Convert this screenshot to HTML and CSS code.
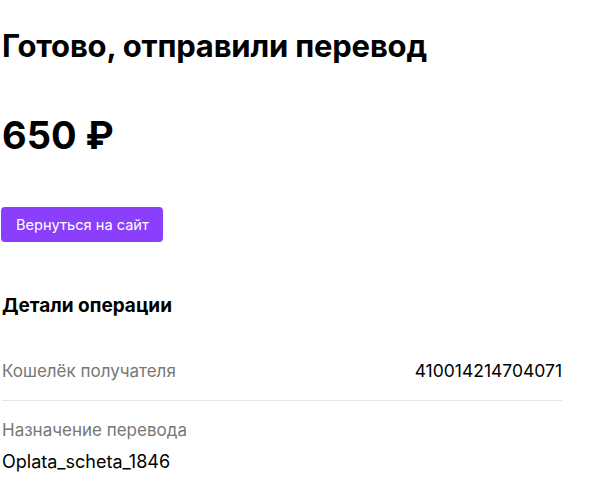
FILE: index.html
```html
<!DOCTYPE html>
<html lang="ru">
<head>
<meta charset="utf-8">
<link rel="stylesheet" href="styles.css">
</head>
<body>
<main class="page">
  <h1 class="title">Готово, отправили перевод</h1>
  <div class="amount">650 ₽</div>
  <a class="btn" href="#">Вернуться на сайт</a>
  <h2 class="subtitle">Детали операции</h2>
  <div class="row row-inline">
    <span class="label">Кошелёк получателя</span>
    <span class="value">410014214704071</span>
  </div>
  <div class="row row-stack">
    <span class="label">Назначение перевода</span>
    <span class="value value-long">Oplata_scheta_1846</span>
  </div>
</main>
</body>
</html>
```
FILE: styles.css
```css
html, body { margin: 0; padding: 0; background: #fff; }
body { font-family: Inter, "Noto Sans", sans-serif; color: #000; }
.page { width: 560px; padding: 0 0 0 2px; display: flex; flex-direction: column; align-items: flex-start; }
.title { margin: 26px 0 0; font-size: 31px; font-weight: 700; line-height: 40px; letter-spacing: -0.2px; }
.amount { margin-top: 42px; font-size: 38px; font-weight: 700; line-height: 54px; }
.btn { margin-top: 45px; display: inline-flex; align-items: center; height: 35px; padding: 0 14px 0 15px; background: #8b3ffd; color: #fff; text-decoration: none; font-size: 14.6px; border-radius: 4px; margin-left: -1px; }
.subtitle { margin: 52px 0 0; font-size: 19px; font-weight: 700; line-height: 24px; }
.row { width: 100%; }
.row-inline { margin-top: 41px; display: flex; justify-content: space-between; align-items: center; padding-bottom: 17px; border-bottom: 1px solid #e6e6e6; }
.row-stack { display: flex; flex-direction: column; gap: 8px; padding-top: 17px; }
.label { color: #777; font-size: 17px; line-height: 24px; }
.value { font-size: 17.5px; line-height: 24px; }
.value-long { font-size: 18px; }
```
